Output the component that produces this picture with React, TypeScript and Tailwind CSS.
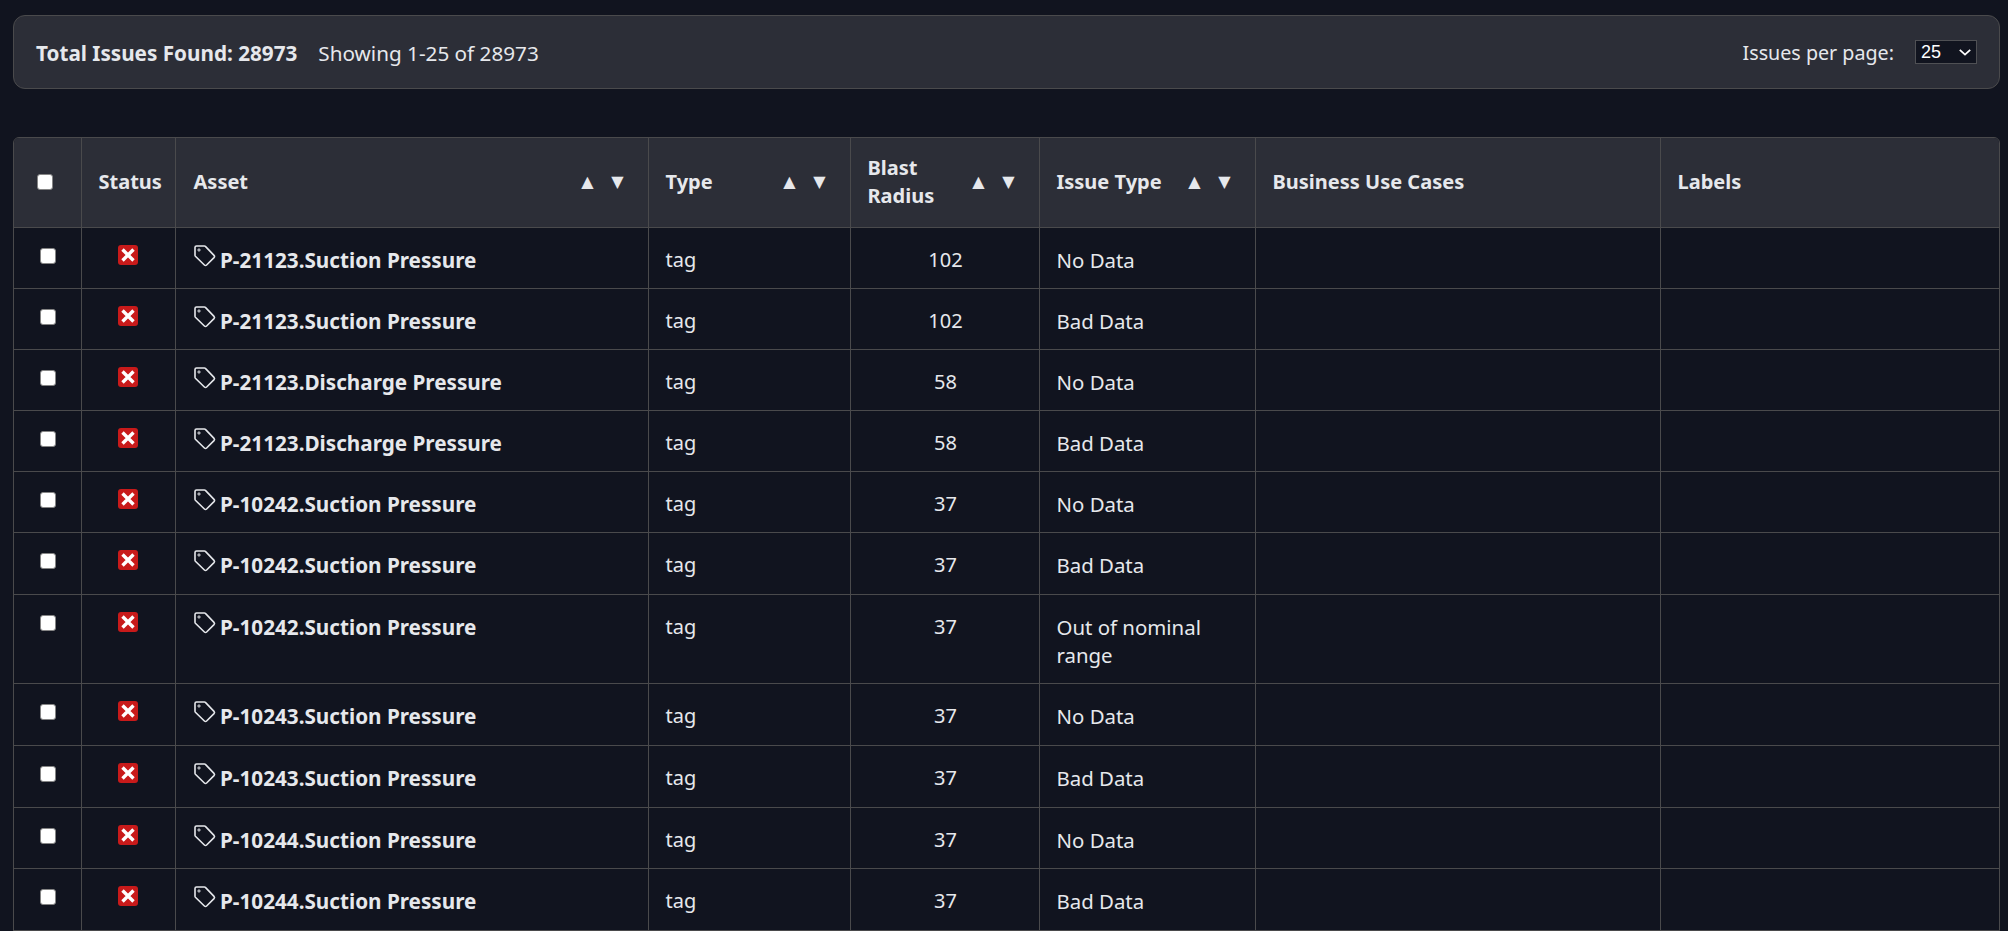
const rows = [
  { asset: "P-21123.Suction Pressure", radius: 102, issue: "No Data", h: "h-[61px]" },
  { asset: "P-21123.Suction Pressure", radius: 102, issue: "Bad Data", h: "h-[61px]" },
  { asset: "P-21123.Discharge Pressure", radius: 58, issue: "No Data", h: "h-[61px]" },
  { asset: "P-21123.Discharge Pressure", radius: 58, issue: "Bad Data", h: "h-[61px]" },
  { asset: "P-10242.Suction Pressure", radius: 37, issue: "No Data", h: "h-[61px]" },
  { asset: "P-10242.Suction Pressure", radius: 37, issue: "Bad Data", h: "h-[62px]" },
  { asset: "P-10242.Suction Pressure", radius: 37, issue: "Out of nominal range", h: "h-[89px]" },
  { asset: "P-10243.Suction Pressure", radius: 37, issue: "No Data", h: "h-[62px]" },
  { asset: "P-10243.Suction Pressure", radius: 37, issue: "Bad Data", h: "h-[62px]" },
  { asset: "P-10244.Suction Pressure", radius: 37, issue: "No Data", h: "h-[61px]" },
  { asset: "P-10244.Suction Pressure", radius: 37, issue: "Bad Data", h: "h-[62px]" },
];

const checkbox =
  "block h-4 w-4 appearance-none rounded-[3px] border-[1.5px] border-[#858585] bg-white checked:border-blue-600 checked:bg-blue-600";

function SortButtons() {
  return (
    <div className="flex shrink-0 items-center">
      <button className="flex w-[30px] justify-center font-['DejaVu_Sans',sans-serif] text-[16px] leading-none">▲</button>
      <button className="flex w-[30px] justify-center font-['DejaVu_Sans',sans-serif] text-[16px] leading-none">▼</button>
    </div>
  );
}

function TagIcon() {
  return (
    <svg viewBox="0 0 24 24" fill="none" stroke="currentColor" className="-mt-[2px] h-6 w-6 shrink-0">
      <circle cx="6" cy="6" r="1.1" strokeWidth="1" />
      <path
        strokeWidth="1.6"
        d="M3.5 2H11.4a1.5 1.5 0 0 1 1 .4L21 11.4a1.6 1.6 0 0 1 0 2.2L13.6 21a1.6 1.6 0 0 1-2.2 0L2.4 12.2a1.5 1.5 0 0 1-.4-1V3.5A1.5 1.5 0 0 1 3.5 2z"
      />
    </svg>
  );
}

function StatusIcon() {
  return (
    <svg viewBox="0 0 20 20" className="mx-auto block h-5 w-5">
      <rect width="20" height="20" rx="3" fill="#c81a1a" />
      <path d="M4.5 4.5l11 11M15.5 4.5l-11 11" stroke="#fff" strokeWidth="3.4" />
    </svg>
  );
}

const line = "border-r border-b border-[#4a4a4c] last:border-r-0";
const th = `${line} pl-[17px] text-left align-middle font-bold`;
const td = `${line} pt-[18px] pl-[17px] align-top`;

export default function App() {
  return (
    <div className="h-screen overflow-hidden bg-[#11141f] pt-[15px] pr-[8px] pl-[13px] font-['Noto_Sans',sans-serif] text-[20px] leading-[28px] text-[#e6e8ec]">
      <div className="flex h-[74px] items-center justify-between rounded-[12px] border border-[#4a4a4c] bg-[#2c2e37] px-[22px]">
        <div className="flex items-center gap-[21px] pt-[2px] text-[20.7px]">
          <span className="font-bold">Total Issues Found: 28973</span>
          <span>Showing 1-25 of 28973</span>
        </div>
        <div className="flex items-center gap-[21px]">
          <span className="pt-[2px] text-[19.7px]">Issues per page:</span>
          <div className="relative">
            <select className="block h-[24px] w-[62px] appearance-none border-[1.5px] border-[#4f5054] bg-[#11141f] pl-[5px] font-['Liberation_Sans',sans-serif] text-[18px] leading-none text-white">
              <option>25</option>
              <option>50</option>
              <option>100</option>
            </select>
            <svg viewBox="0 0 12 7" className="pointer-events-none absolute top-[9px] right-[6px] h-[7px] w-[12px]" fill="none" stroke="#fff" strokeWidth="1.8">
              <path d="M.8.8 6 5.6 11.2.8" />
            </svg>
          </div>
        </div>
      </div>

      <div className="mt-[48px] overflow-hidden rounded-t-[6px] border border-[#4a4a4c]">
        <table className="w-full table-fixed border-collapse">
          <colgroup>
            <col className="w-[67px]" />
            <col className="w-[94px]" />
            <col className="w-[473px]" />
            <col className="w-[202px]" />
            <col className="w-[189px]" />
            <col className="w-[216px]" />
            <col className="w-[405px]" />
            <col className="w-[339px]" />
          </colgroup>
          <thead>
            <tr className="h-[89px] bg-[#2c2e37]">
              <th className={`${line} pl-[23px] align-middle`}>
                <input type="checkbox" className={checkbox} />
              </th>
              <th className={`${th} whitespace-nowrap`}>Status</th>
              <th className={th}>
                <div className="flex items-center justify-between pr-[15px]">
                  <span className="pl-[1px]">Asset</span>
                  <SortButtons />
                </div>
              </th>
              <th className={th}>
                <div className="flex items-center justify-between pr-[15px]">
                  <span>Type</span>
                  <SortButtons />
                </div>
              </th>
              <th className={th}>
                <div className="flex items-center justify-between pr-[15px]">
                  <span>
                    Blast
                    <br />
                    Radius
                  </span>
                  <SortButtons />
                </div>
              </th>
              <th className={th}>
                <div className="flex items-center justify-between pr-[15px]">
                  <span>Issue Type</span>
                  <SortButtons />
                </div>
              </th>
              <th className={th}>Business Use Cases</th>
              <th className={th}>Labels</th>
            </tr>
          </thead>
          <tbody>
            {rows.map((row, i) => (
              <tr key={i} className={row.h}>
                <td className={`${line} pt-[20px] pl-[26px] align-top`}>
                  <input type="checkbox" className={checkbox} />
                </td>
                <td className={`${line} pt-[17px] align-top`}>
                  <StatusIcon />
                </td>
                <td className={td}>
                  <div className="flex items-start gap-[3.5px] text-[20.7px] font-bold">
                    <TagIcon />
                    <span>{row.asset}</span>
                  </div>
                </td>
                <td className={td}>tag</td>
                <td className={`${line} pt-[18px] pl-[2px] text-center align-top`}>{row.radius}</td>
                <td className={`${line} pt-[18px] pr-[17px] pl-[17px] align-top text-[20.4px]`}>{row.issue}</td>
                <td className={td}></td>
                <td className={td}></td>
              </tr>
            ))}
          </tbody>
        </table>
      </div>
    </div>
  );
}
